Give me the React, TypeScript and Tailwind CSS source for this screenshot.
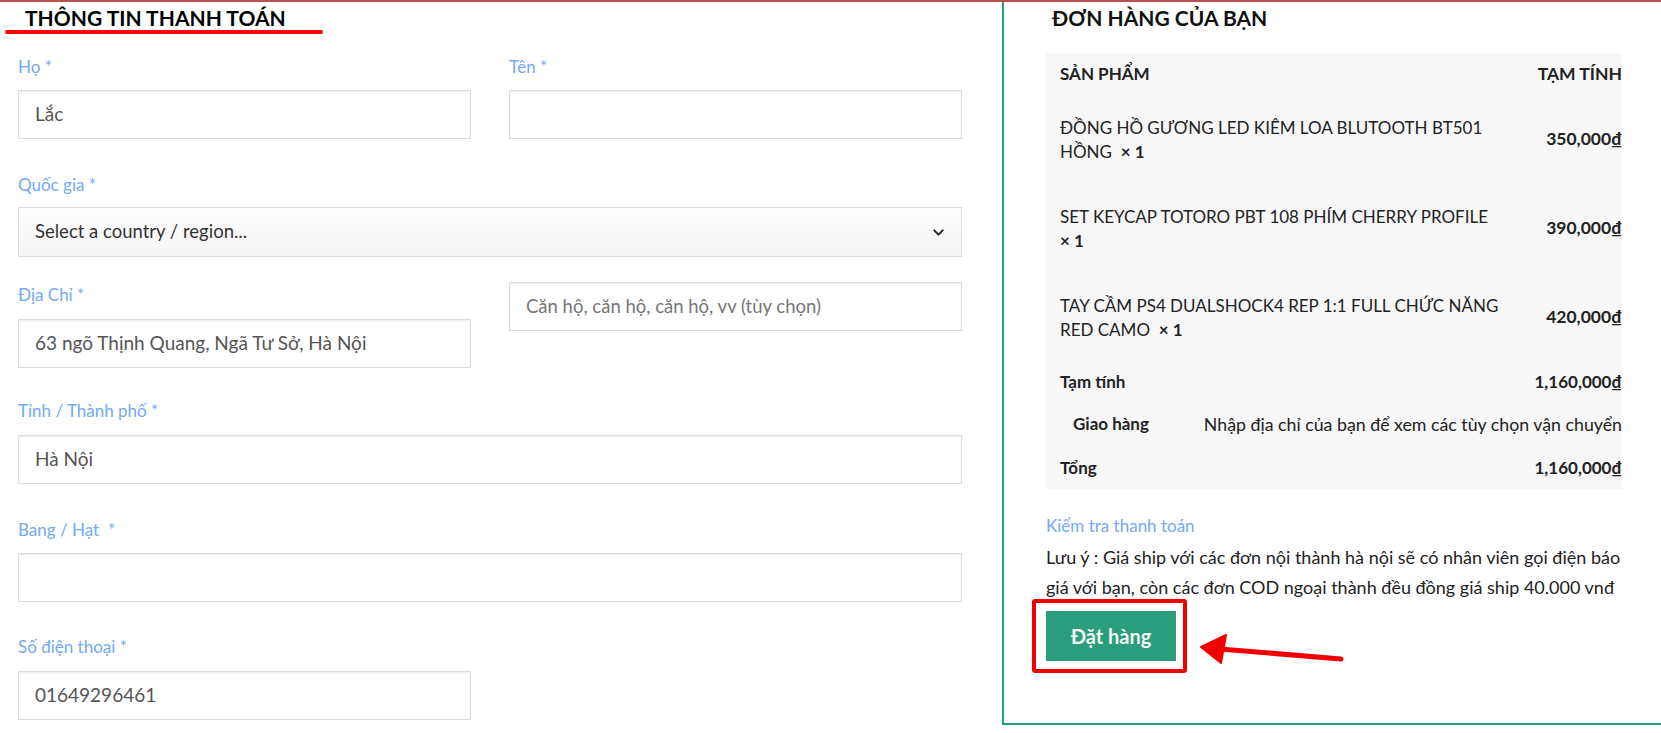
import { ChevronDown } from "lucide-react";

const font = "font-['Lato','Noto_Sans',sans-serif]";

const products = [
  { name: "ĐỒNG HỒ GƯƠNG LED KIÊM LOA BLUTOOTH BT501 HỒNG", price: "350,000₫" },
  { name: "SET KEYCAP TOTORO PBT 108 PHÍM CHERRY PROFILE", price: "390,000₫" },
  { name: "TAY CẦM PS4 DUALSHOCK4 REP 1:1 FULL CHỨC NĂNG RED CAMO", price: "420,000₫" },
];

function Label({ children }: { children: React.ReactNode }) {
  return <div className="h-6 text-[17px] leading-6 text-[#74a9f6]">{children}</div>;
}

function Input({ value, placeholder, className = "" }: { value?: string; placeholder?: string; className?: string }) {
  return (
    <div
      className={`flex h-[49px] items-center border border-[#dcdcdc] bg-white px-4 shadow-[inset_0_1px_2px_rgba(0,0,0,0.08)] ${className}`}
    >
      {value ? (
        <span className="text-[19px] text-[#555]">{value}</span>
      ) : (
        <span className="text-[18.5px] text-[#777]">{placeholder}</span>
      )}
    </div>
  );
}

export default function App() {
  return (
    <div className={`${font} min-h-screen w-full overflow-hidden bg-white`}>
      <div className="h-[2px] w-full bg-[#b9504e]" />

      <div className="flex">
        {/* billing form */}
        <div className="w-[962px] shrink-0 pl-[18px]">
          <div className="relative h-[53px]">
            <h2 className="pl-[7px] pt-[2px] text-[21px] font-bold leading-7 text-black">THÔNG TIN THANH TOÁN</h2>
            <div className="absolute left-[-13px] top-[28px] h-[4px] w-[318px] rounded-full bg-[#ff0000]" />
          </div>

          <div className="grid grid-cols-2 gap-x-[38px]">
            <div>
              <Label>Họ *</Label>
              <Input value="Lắc" className="mt-[11px] h-[48px]" />
            </div>
            <div>
              <Label>Tên *</Label>
              <Input className="mt-[11px] h-[48px]" />
            </div>
          </div>

          <div className="mt-[34px]">
            <Label>Quốc gia *</Label>
            <div className="mt-[10px] flex h-[50px] items-center justify-between border border-[#dcdcdc] bg-gradient-to-b from-white to-[#f4f4f4] pl-4 pr-[14px] text-[18.5px] text-[#333]">
              <span>Select a country / region...</span>
              <ChevronDown size={17} strokeWidth={2.75} className="text-[#222]" />
            </div>
          </div>

          <div className="mt-[25px] grid grid-cols-2 items-start gap-x-[38px]">
            <div className="pt-[1px]">
              <Label>Địa Chỉ *</Label>
              <Input value="63 ngõ Thịnh Quang, Ngã Tư Sở, Hà Nội" className="mt-[12px]" />
            </div>
            <Input placeholder="Căn hộ, căn hộ, căn hộ, vv (tùy chọn)" />
          </div>

          <div className="mt-[31px]">
            <Label>Tỉnh / Thành phố *</Label>
            <Input value="Hà Nội" className="mt-[12px]" />
          </div>

          <div className="mt-[34px]">
            <Label>Bang / Hạt &nbsp;*</Label>
            <Input className="mt-[11px]" />
          </div>

          <div className="mt-[33px] grid grid-cols-2 gap-x-[38px]">
            <div>
              <Label>Số điện thoại *</Label>
              <Input value="01649296461" className="mt-[12px] h-[48px]" />
            </div>
          </div>
        </div>

        {/* order review */}
        <div className="ml-[40px] w-[700px] shrink-0 border-b-2 border-l-2 border-[#27a17c] pb-[62px] pl-[42px]">
          <h3 className="h-[51px] pl-[6px] pt-[2px] text-[21px] font-bold leading-7 text-[#111]">ĐƠN HÀNG CỦA BẠN</h3>

          <div className="w-[576px] bg-[#f7f7f7] text-[17px] text-[#222]">
            <div className="flex h-[42px] items-center justify-between pl-[14px] font-bold">
              <span>SẢN PHẨM</span>
              <span className="text-[17.5px]">TẠM TÍNH</span>
            </div>
            {products.map((p) => (
              <div key={p.name} className="flex h-[89px] items-center">
                <div className="w-[466px] pl-[14px] leading-6">
                  {p.name}&nbsp; <strong>×&nbsp;1</strong>
                </div>
                <div className="flex-1 text-right text-[17.5px] font-bold">{p.price}</div>
              </div>
            ))}
            <div className="flex h-[40px] items-center justify-between pl-[14px] font-bold">
              <span>Tạm tính</span>
              <span>1,160,000₫</span>
            </div>
            <div className="flex h-[44px] items-center justify-between pl-[27px]">
              <span className="font-bold">Giao hàng</span>
              <span className="text-[17.75px]">Nhập địa chỉ của bạn để xem các tùy chọn vận chuyển</span>
            </div>
            <div className="flex h-[43px] items-center justify-between pl-[14px] font-bold">
              <span>Tổng</span>
              <span>1,160,000₫</span>
            </div>
          </div>

          <div className="mt-[25px] h-6 text-[17px] leading-6 text-[#74a9f6]">Kiểm tra thanh toán</div>
          <p className="mt-[4px] w-[580px] text-[18px] leading-[30px] text-[#222]">
            Lưu ý : Giá ship với các đơn nội thành hà nội sẽ có nhân viên gọi điện báo giá với bạn, còn các đơn COD ngoại thành đều đồng giá ship 40.000 vnđ
          </p>

          <div className="relative mt-[9px] w-fit">
            <button className="flex h-[50px] w-[130px] items-center justify-center bg-[#2a9e7c] text-[20px] font-bold text-[#f4f4f4]">
              Đặt hàng
            </button>
            {/* annotation */}
            <div className="pointer-events-none absolute left-[-14px] top-[-12px] h-[74px] w-[155px] rounded-[3px] border-[4px] border-[#f00000]" />
            <svg className="pointer-events-none absolute left-[150px] top-[20px]" width="160" height="45" viewBox="0 0 160 45">
              <line x1="24" y1="18" x2="145" y2="28" stroke="#f00000" strokeWidth="5" strokeLinecap="round" />
              <polygon points="5,16 30,4 25,32" fill="#f00000" stroke="#f00000" strokeWidth="2" strokeLinejoin="round" />
            </svg>
          </div>
        </div>
      </div>
    </div>
  );
}
